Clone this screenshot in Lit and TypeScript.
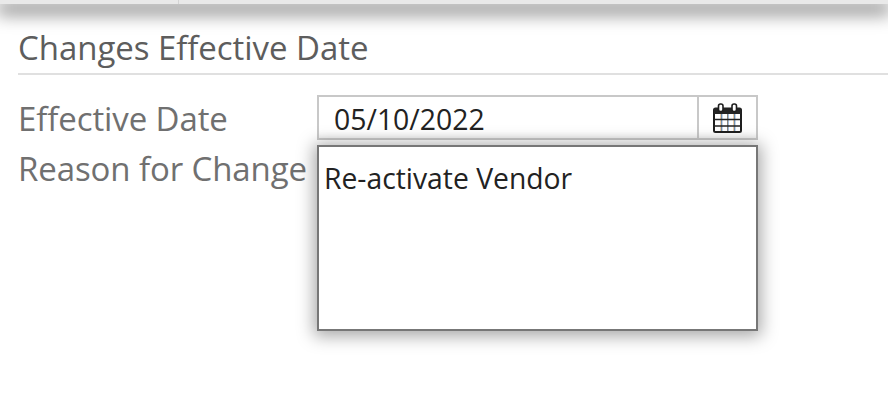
import { LitElement, html, css } from "lit";
import { customElement } from "lit/decorators.js";

@customElement("app-root")
export class AppRoot extends LitElement {
  static styles = css`
    :host { display: block; width: 888px; height: 407px; overflow: hidden; background: #fff; font-family: "Open Sans", "Noto Sans", sans-serif; }
    .top { display: flex; height: 4px; background: #e9e9e9; box-shadow: 0 6px 18px 3px rgba(0,0,0,.6); }
    .top i { width: 178px; border-right: 1px solid #d4d4d4; }
    .content { padding: 24px 0 0 18px; }
    h2 { margin: 0; font-weight: 400; font-size: 33px; line-height: 40px; height: 45px; color: #5d5d5d; border-bottom: 2px solid #e0e0e0; letter-spacing: -0.05px; white-space: nowrap; }
    .form { display: grid; grid-template-columns: 299px 441px; grid-template-rows: 50px 186px; padding-top: 20px; }
    label { font-size: 33px; line-height: 48px; color: #707070; letter-spacing: -0.1px; white-space: nowrap; }
    .date { display: flex; height: 45px; box-sizing: border-box; border: 2px solid #c8c8c8; box-shadow: inset 0 -8px 8px -8px rgba(0,0,0,.12); }
    .val { flex: 1; padding-left: 15px; font-size: 28.4px; line-height: 44px; color: #222; border-right: 2px solid #c8c8c8; }
    .btn { width: 57px; display: flex; align-items: center; justify-content: center; }
    .area { height: 186px; box-sizing: border-box; border: 2px solid #777; padding: 11px 5px; font-size: 28.3px; line-height: 40px; color: #222; box-shadow: 0 2px 16px 3px rgba(0,0,0,.35); background: #fff; }
  `;
  render() {
    return html`
      <div class="top"><i></i></div>
      <div class="content">
        <h2>Changes Effective Date</h2>
        <div class="form">
          <label>Effective Date</label>
          <div class="date"><div class="val">05/10/2022</div>
            <div class="btn"><svg width="29" height="30" viewBox="0 0 29 30" fill="none"><rect x="1" y="5.500" width="27" height="23.500" rx="1.500" fill="#fff" stroke="#1e1e1e" stroke-width="2"/><rect x="1" y="5" width="27" height="6" fill="#242424"/><path d="M8 11v17M14.500 11v17M21 11v17" stroke="#d9913f" stroke-width="1"/><path d="M8.800 11v17M15 11v17M21.800 11v17" stroke="#3f78b8" stroke-width="1"/><path d="M1 16.500h27M1 23h27" stroke="#222" stroke-width="1.600"/><rect x="5.500" y="1" width="4.500" height="7.500" rx="2" fill="#fff" stroke="#1e1e1e" stroke-width="1.600"/><rect x="19" y="1" width="4.500" height="7.500" rx="2" fill="#fff" stroke="#1e1e1e" stroke-width="1.600"/></svg></div>
          </div>
          <label>Reason for Change</label>
          <div class="area">Re-activate Vendor</div>
        </div>
      </div>
    `;
  }
}
